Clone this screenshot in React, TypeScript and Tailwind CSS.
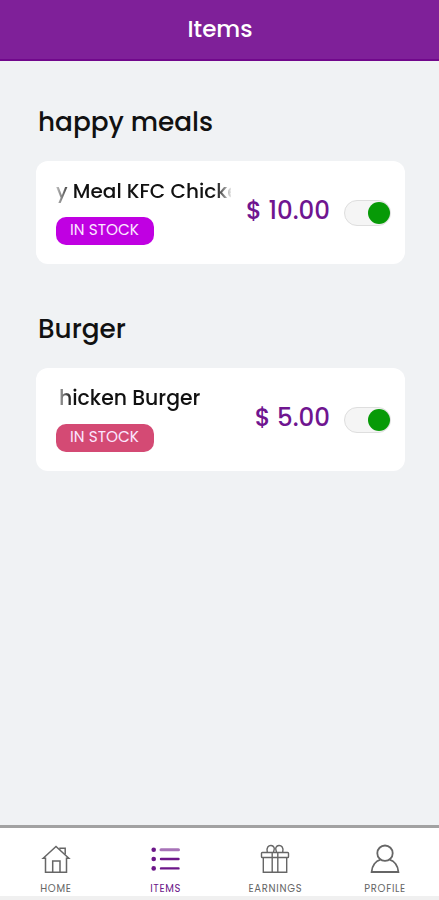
import { useState } from "react";
import clsx from "clsx";

interface Item {
  name: string;
  price: string;
  nameClass: string;
  badgeClass: string;
}

const categories: { title: string; items: Item[] }[] = [
  {
    title: "happy meals",
    items: [
      {
        name: "y Meal KFC Chicke",
        price: "$ 10.00",
        nameClass: "text-[20px]",
        badgeClass: "bg-[#c000e2]",
      },
    ],
  },
  {
    title: "Burger",
    items: [
      {
        name: "hicken Burger",
        price: "$ 5.00",
        nameClass: "pl-[3px] text-[20.4px]",
        badgeClass: "bg-[#d44a74]",
      },
    ],
  },
];

const HomeIcon = () => (
  <svg width="30" height="30" viewBox="0 0 30 30" fill="none" stroke="currentColor" strokeWidth="1.5">
    <path d="M2.2 14.2 15 2.4l12.8 11.8h-2.3v14h-21v-14z" />
    <path d="M19 5.5V4.2h5.2v6M11.7 28.2V17h7.3v11.2" />
  </svg>
);

const ItemsIcon = () => (
  <svg width="30" height="30" viewBox="0 0 30 30" fill="none" stroke="currentColor">
    <g fill="currentColor" stroke="none">
      <circle cx="2.7" cy="5.7" r="2.3" />
      <circle cx="2.7" cy="15" r="2.3" />
      <circle cx="2.7" cy="24.4" r="2.3" />
    </g>
    <g strokeLinecap="round">
      <path d="M10 5.7h17.5" strokeWidth="3" opacity="0.6" />
      <path d="M10 15h17.5M10 24.4h17.5" strokeWidth="2.4" />
    </g>
  </svg>
);

const GiftIcon = () => (
  <svg width="30" height="30" viewBox="0 0 30 30" fill="none" stroke="currentColor" strokeWidth="1.4">
    <rect x="1.5" y="8.5" width="27" height="5" rx="0.8" />
    <path d="M3.3 13.5v14.8h23.4V13.5M12.2 8.5v19.8M17.8 8.5v19.8" />
    <path d="M13.5 8.3C13.5 6.6 15 5.2 14 3.3 12.8 1.2 9.5.8 7.8 3 6.5 4.8 7 6.8 7.3 8.3M16.5 8.3c0-1.7-1.5-3.1-.5-5C17.2 1.2 20.5.8 22.2 3c1.3 1.8.8 3.8.5 5.3" />
  </svg>
);

const ProfileIcon = () => (
  <svg width="30" height="30" viewBox="0 0 30 30" fill="none" stroke="currentColor" strokeWidth="1.8">
    <circle cx="15" cy="9.2" r="7.7" />
    <path d="M10.5 15.6C5.5 17 2 22 1.6 28h26.8c-.4-6-3.9-11-8.9-12.4" />
  </svg>
);

const tabs = [
  { label: "HOME", icon: HomeIcon },
  { label: "ITEMS", icon: ItemsIcon },
  { label: "EARNINGS", icon: GiftIcon },
  { label: "PROFILE", icon: ProfileIcon },
];

function Toggle() {
  const [on, setOn] = useState(true);

  return (
    <button
      role="switch"
      aria-checked={on}
      aria-label="Available"
      onClick={() => setOn(!on)}
      className={clsx(
        "flex h-[26px] w-[47px] items-center rounded-full border border-[#dedede] bg-[#f5f5f5]",
        on ? "justify-end" : "justify-start"
      )}
    >
      <span className="size-[22px] rounded-full bg-[#079a07]" />
    </button>
  );
}

function ItemCard({ item }: { item: Item }) {
  return (
    <div className="flex h-[103px] rounded-xl bg-white pr-[14px] pl-5">
      <div className="w-[175px] shrink-0 pt-[15px]">
        <p
          className={clsx(
            "leading-[30px] font-medium whitespace-nowrap text-[#111] [mask-image:linear-gradient(to_right,rgba(0,0,0,0.25),black_16px,black_160px,rgba(0,0,0,0.1))]",
            item.nameClass
          )}
        >
          {item.name}
        </p>
        <span
          className={clsx(
            "mt-[11px] flex h-7 w-[98px] items-center justify-center rounded-[10px] pr-px pb-px text-[15.3px] text-[#fbe6ff]",
            item.badgeClass
          )}
        >
          IN STOCK
        </span>
      </div>
      <div className="flex flex-1 items-start justify-end pt-[35px] text-[24.5px] leading-[30px] font-medium whitespace-nowrap text-[#6f1590]">
        {item.price}
      </div>
      <div className="ml-[14px] pt-[39px]">
        <Toggle />
      </div>
    </div>
  );
}

export default function App() {
  const [active, setActive] = useState("ITEMS");

  return (
    <div className="flex h-[900px] w-full flex-col bg-[#f0f2f4] font-[Poppins,Inter,sans-serif]">
      <header className="flex h-[61px] shrink-0 items-center justify-center border-b-2 border-[#71088c] bg-[#7f2099] pl-px text-[23px] text-white">
        <h1 className="font-medium">Items</h1>
      </header>

      <main className="flex-1 px-9 pt-10 pr-[34px]">
        {categories.map((category) => (
          <section key={category.title} className="mb-11">
            <h2 className="mb-[19px] pl-0.5 text-[26.3px] leading-[41px] font-medium text-[#111]">
              {category.title}
            </h2>
            {category.items.map((item) => (
              <ItemCard key={item.name} item={item} />
            ))}
          </section>
        ))}
      </main>

      {/* Bottom tabs */}
      <nav className="flex h-[75px] shrink-0 border-t-[3px] border-b-4 border-t-[#a2a2a2] border-b-[#f0f0f0] bg-white">
        {tabs.map(({ label, icon: Icon }) => (
          <button
            key={label}
            onClick={() => setActive(label)}
            className={clsx(
              "flex flex-1 flex-col items-center pt-4 pl-0.5 text-[10px]",
              active === label ? "text-[#6c1689]" : "text-[#666]"
            )}
          >
            <Icon />
            <span className="mt-2 leading-[14px] tracking-[0.7px]">{label}</span>
          </button>
        ))}
      </nav>
    </div>
  );
}
